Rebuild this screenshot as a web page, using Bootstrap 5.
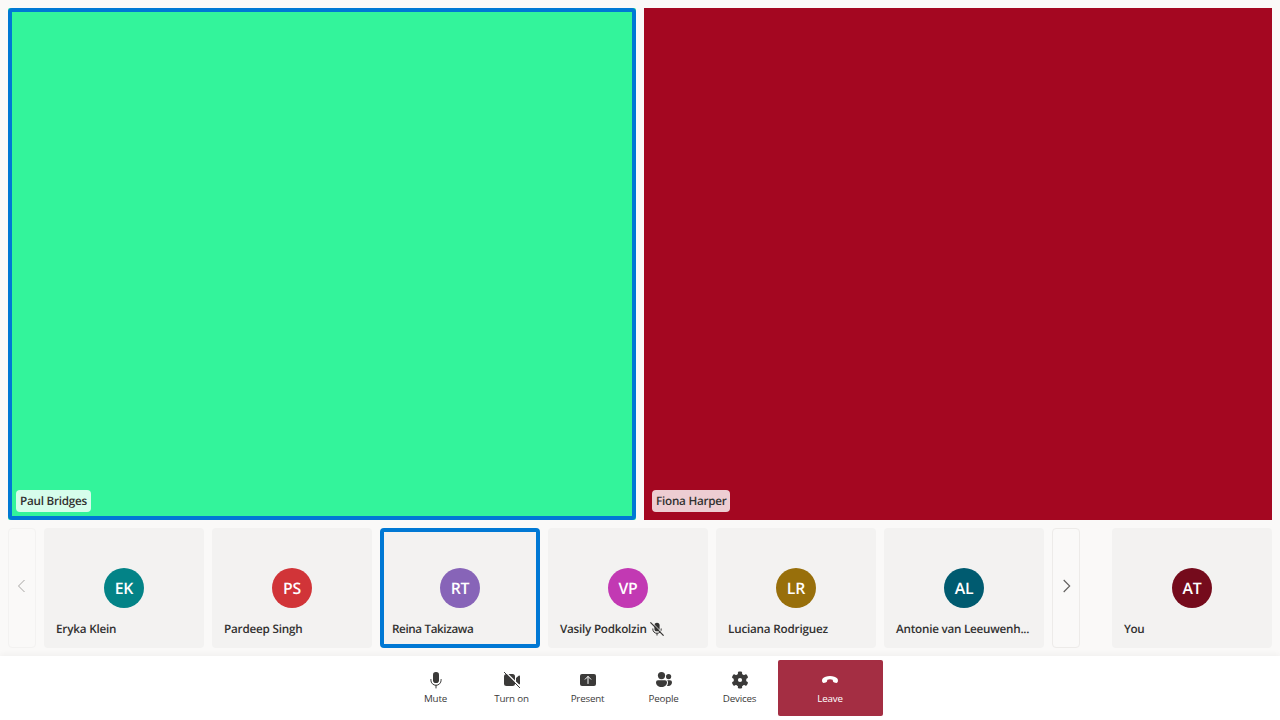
<!DOCTYPE html>
<html lang="en">
<head>
<meta charset="utf-8">
<meta name="viewport" content="width=device-width, initial-scale=1">
<title>Call</title>
<link rel="stylesheet" href="https://cdn.jsdelivr.net/npm/bootstrap@5.3.0/dist/css/bootstrap.min.css">
<style>
body{background:#faf9f8;color:#323130;font-family:"Segoe UI","Open Sans",sans-serif;font-size:12px;line-height:16px;text-rendering:geometricPrecision}
.stage{height:512px}
.tile{border-radius:4px;position:relative}
.tile.green{background:#33f49b;border-radius:2px}
.tile.red{background:#a40721;border-radius:0}
.tile.speaking::after{content:"";position:absolute;inset:0;border:4px solid #0078d4;border-radius:4px}
.tag{position:absolute;left:8px;bottom:8px;height:22px;padding:3px 4px;border-radius:4px;background:rgba(255,255,255,.8)}
.tag-paul{width:75px}
.tag-fiona{width:78px}
.who{font-weight:600;font-size:11.7px;line-height:16px;white-space:nowrap;letter-spacing:-.2px}
.who.snug{letter-spacing:-.24px}
.who.tight{letter-spacing:-.38px}
.strip{height:120px}
.person{width:160px;height:120px;background:#f3f2f1}
.person .who{position:absolute;left:12px;bottom:11px}
.muted-name{width:90px}
.avatar{width:40px;height:40px;font-size:15.8px;font-weight:600;color:#fff;letter-spacing:-.2px}
.pager{width:28px;height:120px;border:1px solid #edebe9;border-radius:4px;background:transparent;padding:0 0 4px;color:#605e5c}
.pager:disabled{color:#a8a6a4;border-color:#f3f2f1}
.controls{height:64px;background:#fff;box-shadow:0 -2px 6px rgba(0,0,0,.04);position:relative}
.control{width:76px;height:56px;border:0;border-radius:2px;background:transparent;color:#3b3a39;font-size:9.8px;line-height:14px;letter-spacing:-.2px;padding:10px 0 0}
.control span{margin-top:2px}
.control.leave{width:105px;background:#a42e43;color:#fff}
</style>
</head>
<body class="vh-100 overflow-hidden d-flex flex-column">
<main class="flex-grow-1 p-2 d-flex flex-column gap-2">
  <section class="stage d-flex gap-2">
    <div class="tile green speaking flex-fill w-50"><div class="tag tag-paul who snug">Paul Bridges</div></div>
    <div class="tile red flex-fill w-50"><div class="tag tag-fiona who snug">Fiona Harper</div></div>
  </section>
  <section class="strip d-flex gap-2">
    <button class="pager d-flex align-items-center justify-content-center" disabled aria-label="Previous"><svg width="14" height="14" viewBox="0 0 14 14" fill="none" stroke="currentColor"><path d="M9.500 1 3.500 7l6 6"/></svg></button>
    <div class="tile person d-flex align-items-center justify-content-center"><div class="avatar rounded-circle d-flex align-items-center justify-content-center" style="background:#038387">EK</div><div class="who">Eryka Klein</div></div>
    <div class="tile person d-flex align-items-center justify-content-center"><div class="avatar rounded-circle d-flex align-items-center justify-content-center" style="background:#d13438">PS</div><div class="who">Pardeep Singh</div></div>
    <div class="tile person speaking d-flex align-items-center justify-content-center"><div class="avatar rounded-circle d-flex align-items-center justify-content-center" style="background:#8764b8">RT</div><div class="who tight">Reina Takizawa</div></div>
    <div class="tile person d-flex align-items-center justify-content-center"><div class="avatar rounded-circle d-flex align-items-center justify-content-center" style="background:#c239b3">VP</div><div class="who snug d-flex align-items-center"><span class="muted-name">Vasily Podkolzin</span><svg width="14" height="14" viewBox="0 0 14 14"><rect x="4.400" y=".7" width="5.200" height="8.600" rx="2.600" fill="#323130"/><path d="M2.800 6.500v.6a4.200 4.200 0 0 0 8.400 0v-.6M7 11.300v2.200" fill="none" stroke="#323130"/><path d="m1.300-.1 13 13" stroke="#f3f2f1"/><path d="m.4.4 13.200 13.200" stroke="#323130" stroke-width="1.200"/></svg></div></div>
    <div class="tile person d-flex align-items-center justify-content-center"><div class="avatar rounded-circle d-flex align-items-center justify-content-center" style="background:#986f0b">LR</div><div class="who">Luciana Rodriguez</div></div>
    <div class="tile person d-flex align-items-center justify-content-center"><div class="avatar rounded-circle d-flex align-items-center justify-content-center" style="background:#005b70">AL</div><div class="who snug">Antonie van Leeuwenh...</div></div>
    <button class="pager d-flex align-items-center justify-content-center" aria-label="Next"><svg width="14" height="14" viewBox="0 0 14 14" fill="none" stroke="currentColor" stroke-width="1.100"><path d="m4.700 1 6 6-6 6"/></svg></button>
    <div class="tile person ms-auto d-flex align-items-center justify-content-center"><div class="avatar rounded-circle d-flex align-items-center justify-content-center" style="background:#750b1c">AT</div><div class="who tight">You</div></div>
  </section>
</main>
<footer class="controls d-flex justify-content-center align-items-center">
  <button class="control d-flex flex-column align-items-center"><svg width="20" height="20" viewBox="0 0 20 20"><rect x="7" y="2" width="6" height="11" rx="2.800" fill="currentColor"/><path d="M4.900 9.500v.7a5.100 5.100 0 0 0 10.200 0v-.7M10 15.300V18" fill="none" stroke="currentColor" stroke-linecap="round"/></svg><span>Mute</span></button>
  <button class="control d-flex flex-column align-items-center"><svg width="20" height="20" viewBox="0 0 20 20"><rect x="2" y="4" width="11" height="12" rx="2.500" fill="currentColor"/><path d="m14 8 2.700-2.300c.6-.5 1.300-.2 1.300.5v7.600c0 .7-.7 1-1.300.5L14 12z" fill="currentColor"/><path d="m3.400 1.800 15.200 15.200" stroke="#fff" stroke-width="1.300"/><path d="m2.300 2.300 15.400 15.400" stroke="currentColor" stroke-linecap="round"/></svg><span>Turn on</span></button>
  <button class="control d-flex flex-column align-items-center"><svg width="20" height="20" viewBox="0 0 20 20"><rect x="2" y="4" width="16" height="12" rx="2" fill="currentColor"/><path d="M10 13.500v-7M7.200 9.200 10 6.400l2.800 2.800" fill="none" stroke="#fff" stroke-linecap="round" stroke-linejoin="round"/></svg><span>Present</span></button>
  <button class="control d-flex flex-column align-items-center"><svg width="20" height="20" viewBox="0 0 20 20" fill="currentColor"><circle cx="7.500" cy="5.600" r="3.600"/><circle cx="14.600" cy="6.600" r="2.600"/><path d="M4 10.200h7a2 2 0 0 1 2 2c0 3-2.400 4.800-5.500 4.800S2 15.200 2 12.200a2 2 0 0 1 2-2zM13.200 10.200H16a2 2 0 0 1 2 2c0 2.300-1.500 3.900-3.700 3.900-.5 0-1-.1-1.400-.2.700-.9 1.100-2.100 1.100-3.500 0-.8-.3-1.600-.8-2.200z"/></svg><span>People</span></button>
  <button class="control d-flex flex-column align-items-center"><svg width="20" height="20" viewBox="0 0 20 20"><g fill="currentColor"><circle cx="10" cy="10" r="6.300"/><rect x="7.900" y="1.500" width="4.200" height="17" rx="1.300"/><rect x="7.900" y="1.500" width="4.200" height="17" rx="1.300" transform="rotate(60 10 10)"/><rect x="7.900" y="1.500" width="4.200" height="17" rx="1.300" transform="rotate(120 10 10)"/></g><circle cx="10" cy="10" r="2.100" fill="#fff"/></svg><span>Devices</span></button>
  <button class="control leave d-flex flex-column align-items-center"><svg width="20" height="20" viewBox="0 0 20 20" fill="currentColor"><path d="M10 6c3.200 0 6 .9 7.300 2.500.8 1 .8 2.400.4 3.600-.2.600-.8.900-1.400.8l-2-.4c-.7-.1-1.200-.6-1.300-1.200l-.4-1.500C11.800 9.500 10.900 9.300 10 9.300s-1.800.2-2.600.5L7 11.300c-.1.600-.6 1.100-1.300 1.200l-2 .4c-.6.100-1.200-.2-1.400-.8-.4-1.200-.4-2.600.4-3.600C4 6.900 6.800 6 10 6z"/></svg><span>Leave</span></button>
</footer>
<script src="https://cdn.jsdelivr.net/npm/bootstrap@5.3.0/dist/js/bootstrap.bundle.min.js"></script>
</body>
</html>
